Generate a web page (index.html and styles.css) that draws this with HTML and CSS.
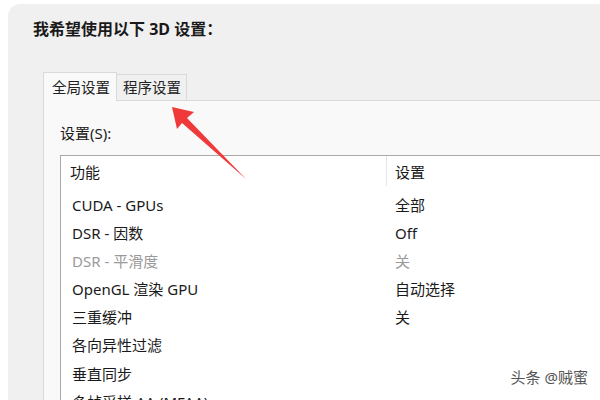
FILE: index.html
```html
<!DOCTYPE html>
<html lang="zh">
<head>
  <meta charset="UTF-8">
  <title>3D 设置</title>
  <link rel="stylesheet" href="styles.css">
</head>
<body>
  <div class="panel">
    <h1>我希望使用以下 3D 设置：</h1>
    <div class="tabs">
      <div class="tab active">全局设置</div>
      <div class="tab">程序设置</div>
    </div>
    <div class="tab-body">
      <div class="caption">设置(S):</div>
      <div class="list">
        <div class="row head">
          <div class="col-name">功能</div>
          <div class="col-val">设置</div>
        </div>
        <div class="row"><div class="col-name">CUDA - GPUs</div><div class="col-val">全部</div></div>
        <div class="row"><div class="col-name">DSR - 因数</div><div class="col-val">Off</div></div>
        <div class="row disabled"><div class="col-name">DSR - 平滑度</div><div class="col-val">关</div></div>
        <div class="row"><div class="col-name">OpenGL 渲染 GPU</div><div class="col-val">自动选择</div></div>
        <div class="row"><div class="col-name">三重缓冲</div><div class="col-val">关</div></div>
        <div class="row"><div class="col-name">各向异性过滤</div><div class="col-val"></div></div>
        <div class="row"><div class="col-name">垂直同步</div><div class="col-val"></div></div>
        <div class="row"><div class="col-name">多帧采样 AA (MFAA)</div><div class="col-val"></div></div>
      </div>
    </div>
  </div>

  <svg class="arrow" width="600" height="400" viewBox="0 0 600 400">
    <polygon points="172,107 194,112 187,118 246,179 182,123 177,129" fill="#f0393a"/>
  </svg>

  <div class="watermark">头条 @贼蜜</div>
</body>
</html>
```

FILE: styles.css
```css
body {
  margin: 0;
  width: 600px;
  height: 400px;
  overflow: hidden;
  background: #ffffff;
  font-family: "Noto Sans", "Noto Sans CJK SC", sans-serif;
  color: #1a1a1a;
  position: relative;
}
.panel {
  margin: 4px 0 0 8px;
  height: 396px;
  background: #f0f0f0;
  border-radius: 12px 0 0 0;
  padding: 0 0 0 35px;
  overflow: hidden;
}
h1 {
  box-sizing: border-box;
  margin: 0 0 0 -10px;
  padding: 13px 0 0 0;
  font-size: 16px;
  font-weight: 700;
  line-height: 24px;
  height: 54px;
}
.tabs {
  display: flex;
  align-items: flex-end;
  height: 42px;
}
.tab {
  font-size: 14.5px;
  line-height: 22px;
  padding: 1px 5px 1px 6px;
  height: 23px;
  border: 1px solid #d9d9d9;
  border-bottom: none;
  background: #f0f0f0;
  color: #222;
}
.tab.active {
  background: #f9f9f9;
  height: 28px;
  line-height: 28px;
  padding: 0 6px 0 8px;
  margin-bottom: -1px;
  position: relative;
  z-index: 1;
}
.tab + .tab {
  border-left: none;
}
.tab-body {
  background: #f9f9f9;
  border-top: 1px solid #d9d9d9;
  border-left: 1px solid #d9d9d9;
  height: 320px;
  padding: 21px 0 0 16px;
}
.caption {
  font-size: 15px;
  line-height: 22px;
  height: 33px;
}
.list {
  background: #ffffff;
  border-top: 1px solid #a9a9a9;
  border-left: 1px solid #a9a9a9;
  height: 300px;
}
.row {
  display: flex;
  font-size: 15px;
  height: 28.2px;
  line-height: 28.2px;
}
.row.head {
  height: 33px;
  line-height: 33px;
  margin-bottom: 1.5px;
}
.row.head .col-name {
  padding-left: 9px;
}
.row.head .col-val {
  border-left: 1px solid #e5e5e5;
  padding-left: 8px;
  height: 30px;
  line-height: 33px;
}
.col-name {
  width: 314px;
  padding-left: 11px;
  white-space: nowrap;
}
.row.head .col-name {
  width: 316px;
}
.col-val {
  flex: 1;
  padding-left: 9px;
}
.row.disabled {
  color: #9a9a9a;
}
.arrow {
  position: absolute;
  left: 0;
  top: 0;
  pointer-events: none;
}
.watermark {
  position: absolute;
  right: 12px;
  bottom: 13px;
  font-size: 15px;
  color: #555;
  text-shadow: 0 0 2px #fff, 0 0 2px #fff;
}
```
